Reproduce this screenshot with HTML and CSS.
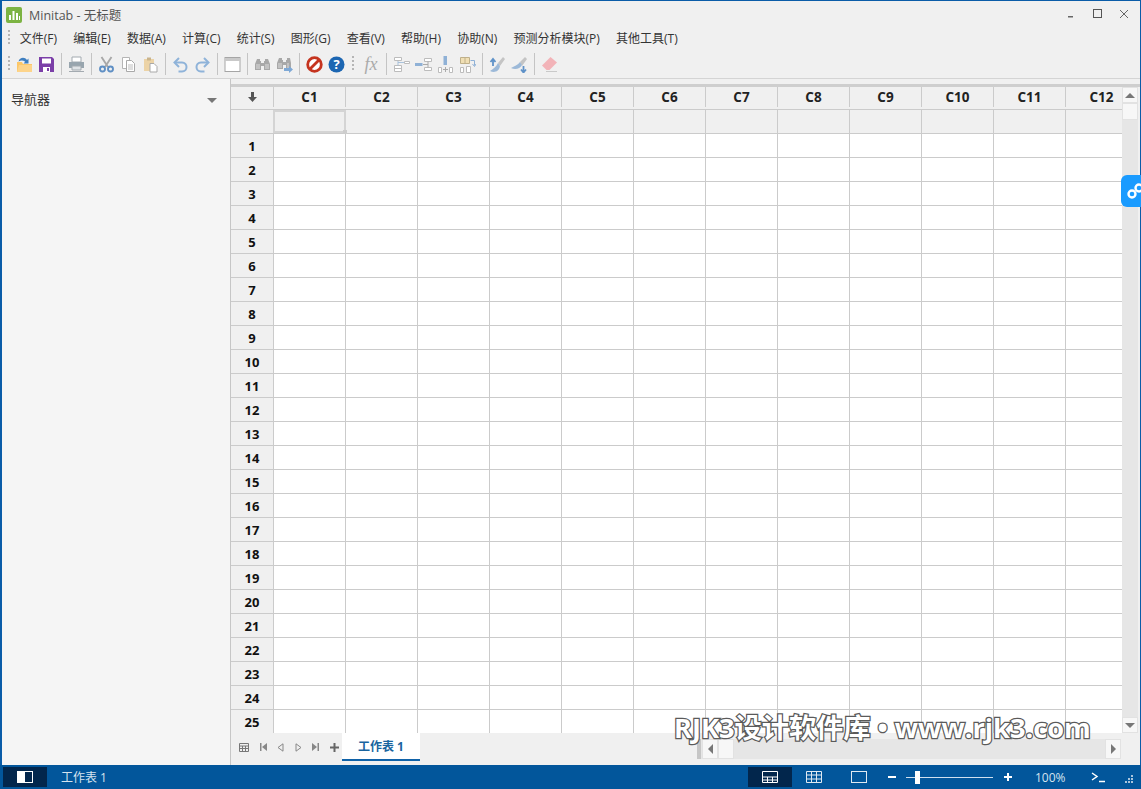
FILE: index.html
```html
<!DOCTYPE html>
<html lang="zh-CN">
<head>
    <meta charset="UTF-8">
    <title>Minitab - 无标题</title>
    <link rel="stylesheet" href="styles.css">
</head>
<body>
<div class="window">
    <div class="titlebar">
        <svg class="app-logo" width="16" height="16" viewBox="0 0 16 16"><rect width="16" height="16" rx="2" fill="#7cb342"/><path d="M3 8h2v5H3zM6.500 4h2v9h-2zM10 6h2v7h-2zM13 9h1v4h-1z" fill="#fff"/></svg>
        <span class="app-title">Minitab - 无标题</span>
        <div class="win-buttons">
            <svg width="12" height="12" viewBox="0 0 12 12"><path d="M2 8h5v1.500H2z" fill="#666"/></svg>
            <svg width="12" height="12" viewBox="0 0 12 12"><rect x="1.500" y="1.500" width="8" height="8" fill="none" stroke="#555"/></svg>
            <svg width="12" height="12" viewBox="0 0 12 12"><path d="M2 2l8 8M10 2l-8 8" stroke="#666" fill="none"/></svg>
        </div>
    </div>

    <div class="menubar">
        <span class="grip"></span>
        <span>文件(F)</span><span>编辑(E)</span><span>数据(A)</span><span>计算(C)</span><span>统计(S)</span><span>图形(G)</span><span>查看(V)</span><span>帮助(H)</span><span>协助(N)</span><span>预测分析模块(P)</span><span>其他工具(T)</span>
    </div>

    <div class="toolbar">
        <span class="grip"></span>
        <span class="tool"><svg viewBox="0 0 17 17"><path d="M1 6h5l1 2h9v8H1z" fill="#fcc768"/><path d="M1 16l2-7h13v7z" fill="#fdd48a"/><path d="M2.500 5.500c1-4 6-5 8.500-1.500l1.500-1.500v5h-5l1.700-1.700C7 4 5 4 2.500 5.500z" fill="#3f7fc0"/></svg></span>
        <span class="tool"><svg viewBox="0 0 17 17"><path d="M1 1h13l2 2v13H1z" fill="#7b3fa8"/><path d="M4 2.500h9v5H4z" fill="#fff"/><path d="M5 11h7v5H5z" fill="#fff"/><path d="M9 12h2v3H9z" fill="#7b3fa8"/></svg></span>
        <span class="sep"></span>
        <span class="tool"><svg viewBox="0 0 17 17"><path d="M4 1h9v5H4z" fill="#fff" stroke="#a3aab0"/><path d="M1 6h15v6H1z" fill="#98a5ae"/><path d="M4 10h9v4H4z" fill="#dfe3e6" stroke="#a3aab0"/><path d="M1 15.500h15" stroke="#a3aab0"/></svg></span>
        <span class="sep"></span>
        <span class="tool"><svg viewBox="0 0 17 17"><path d="M3.500 1l6.500 10M13.500 1L7 11" stroke="#a8a8a8" stroke-width="1.900" fill="none"/><circle cx="4.500" cy="13" r="2.500" fill="none" stroke="#5f8fc4" stroke-width="1.900"/><circle cx="12.500" cy="13" r="2.500" fill="none" stroke="#5f8fc4" stroke-width="1.900"/></svg></span>
        <span class="tool"><svg viewBox="0 0 17 17"><path d="M2.500 1.500h7v11h-7z" fill="#fff" stroke="#b5b5b5"/><path d="M6.500 4.500h5l3 3v8h-8z" fill="#fff" stroke="#a9a9a9"/><path d="M8 9h5M8 11h5M8 13h5" stroke="#bdbdbd"/></svg></span>
        <span class="tool"><svg viewBox="0 0 17 17"><path d="M2 3h10v12H2z" fill="#ecd3a6"/><path d="M5 1.500h4v3H5z" fill="#c9b48d"/><path d="M8 7.500h4l3 3v5.500H8z" fill="#fff" stroke="#a9a9a9"/></svg></span>
        <span class="sep"></span>
        <span class="tool"><svg viewBox="0 0 17 17"><path d="M3 6.500h7c6 0 6 9 0 9H6.500" fill="none" stroke="#8fb3d9" stroke-width="2"/><path d="M7 2L2.500 6.500 7 11" fill="none" stroke="#8fb3d9" stroke-width="2"/></svg></span>
        <span class="tool"><svg viewBox="0 0 17 17"><path d="M14 6.500H7c-6 0-6 9 0 9h3.500" fill="none" stroke="#8fb3d9" stroke-width="2"/><path d="M10 2l4.500 4.500L10 11" fill="none" stroke="#8fb3d9" stroke-width="2"/></svg></span>
        <span class="sep"></span>
        <span class="tool"><svg viewBox="0 0 17 17"><rect x="1" y="1.500" width="15" height="14" fill="#fff" stroke="#a5a5a5"/><path d="M1 2h15v3H1z" fill="#c9c9c9"/></svg></span>
        <span class="sep"></span>
        <span class="tool"><svg viewBox="0 0 17 17"><path d="M3 3h3v2h1v9H1V8zM14 3h-3v2h-1v9h6V8zM7 7h3v3H7z" fill="#a8a8a8"/><path d="M3 8v5M5 8v5M12 8v5M14 8v5" stroke="#dcdcdc"/></svg></span>
        <span class="tool"><svg viewBox="0 0 17 17"><path d="M3 2h3v2h1v9H1V7zM14 2h-3v2h-1v9h5V7zM7 6h3v3H7z" fill="#a8a8a8"/><path d="M3 7v5M5 7v5M12 7v5" stroke="#dcdcdc"/><path d="M8 12h5v-2l4 3.500-4 3.500v-2H8z" fill="#7fa9d6"/></svg></span>
        <span class="sep"></span>
        <span class="tool"><svg viewBox="0 0 17 17"><circle cx="8.500" cy="8.500" r="6.800" fill="#fff" stroke="#c5341f" stroke-width="2.800"/><path d="M4 13L13 4" stroke="#c5341f" stroke-width="2.800"/></svg></span>
        <span class="tool"><svg viewBox="0 0 17 17"><circle cx="8.500" cy="8.500" r="8" fill="#1c66b2"/><text x="8.500" y="13" class="help-mark">?</text></svg></span>
        <span class="grip tool-grip"></span>
        <span class="tool fx">fx</span>
        <span class="sep"></span>
        <span class="tool"><svg viewBox="0 0 17 17"><path d="M1.500 1.500h7v3h-7zM1.500 9.500h7v6h-7zM1.500 12.500h7M11.500 5.500h5v2h-5z" fill="#fff" stroke="#bcbcbc"/><path d="M5 5v4.500M5 6.500h6" stroke="#a9c2dc"/></svg></span>
        <span class="tool"><svg viewBox="0 0 17 17"><path d="M0 7h7.500v3H0z" fill="#8fb1d6"/><path d="M9.500 2.500h7v3h-7zM9.500 11.500h7v3h-7z" fill="#fff" stroke="#bcbcbc"/><path d="M8 8.500h5M13 5.500v6" stroke="#aaa"/></svg></span>
        <span class="tool"><svg viewBox="0 0 17 17"><path d="M6.500 0h3.500v9H6.500z" fill="#8fb1d6"/><path d="M1.500 11.500h3v5h-3zM12.500 11.500h3v5h-3z" fill="#fff" stroke="#bcbcbc"/><path d="M6 13.500h5M8.500 11v5" stroke="#aaa"/></svg></span>
        <span class="tool"><svg viewBox="0 0 17 17"><path d="M1.500 1.500h9v6h-9z" fill="#f0dfb4" stroke="#bfb08a"/><path d="M6 1.500v6" stroke="#bfb08a"/><path d="M1.500 11.500h3v5h-3zM7.500 10.500h4v6h-4z" fill="#fff" stroke="#bcbcbc"/><path d="M11.500 4.500h4v5M13.500 8l2 2.500 1.500-2.500" fill="none" stroke="#8fb1d6"/></svg></span>
        <span class="sep"></span>
        <span class="tool"><svg viewBox="0 0 17 17"><path d="M9 7l5-6 2 2-5 7z" fill="#c4c4c4"/><path d="M1 15c4 2 9 1 10-5L9 7C7 11 4 13 1 15z" fill="#9cb9d8"/><path d="M4 10V4M1.500 6L4 3l2.500 3" fill="none" stroke="#5f92c8" stroke-width="1.800"/></svg></span>
        <span class="tool"><svg viewBox="0 0 17 17"><path d="M9 6l5-5 2 2-5 7z" fill="#c4c4c4"/><path d="M0 12c4 2 9 1 11-3L9 6C7 9 3 10 0 12z" fill="#9cb9d8"/><path d="M12.500 10v6M10 13.500l2.500 3 2.500-3" fill="none" stroke="#5f92c8" stroke-width="1.800"/></svg></span>
        <span class="sep"></span>
        <span class="tool"><svg viewBox="0 0 17 17"><path d="M1 9.500L9.500 1 16 6.500 8.500 14H5.500z" fill="#f2b3b8"/><path d="M5 15.500h11" stroke="#c9c9c9"/></svg></span>
    </div>

    <div class="main">
        <aside class="nav">
            <span>导航器</span>
            <span class="nav-arrow"></span>
        </aside>

        <section class="sheet">
            <div class="band"></div>
            <div class="sheet-body">
                <div class="grid">
                    <div class="row head">
                        <span class="corner"><svg width="9" height="10" viewBox="0 0 9 10"><path d="M3 0h3v5h3L4.500 10 0 5h3z" fill="#555"/></svg></span>
                        <span class="col">C1</span><span class="col">C2</span><span class="col">C3</span><span class="col">C4</span><span class="col">C5</span><span class="col">C6</span><span class="col">C7</span><span class="col">C8</span><span class="col">C9</span><span class="col">C10</span><span class="col">C11</span><span class="col">C12</span>
                    </div>
                    <div class="row names">
                        <span class="corner"></span>
                        <span class="col selected"></span><span class="col"></span><span class="col"></span><span class="col"></span><span class="col"></span><span class="col"></span><span class="col"></span><span class="col"></span><span class="col"></span><span class="col"></span><span class="col"></span><span class="col"></span>
                    </div>
                    <div class="row"><span class="num">1</span></div>
                    <div class="row"><span class="num">2</span></div>
                    <div class="row"><span class="num">3</span></div>
                    <div class="row"><span class="num">4</span></div>
                    <div class="row"><span class="num">5</span></div>
                    <div class="row"><span class="num">6</span></div>
                    <div class="row"><span class="num">7</span></div>
                    <div class="row"><span class="num">8</span></div>
                    <div class="row"><span class="num">9</span></div>
                    <div class="row"><span class="num">10</span></div>
                    <div class="row"><span class="num">11</span></div>
                    <div class="row"><span class="num">12</span></div>
                    <div class="row"><span class="num">13</span></div>
                    <div class="row"><span class="num">14</span></div>
                    <div class="row"><span class="num">15</span></div>
                    <div class="row"><span class="num">16</span></div>
                    <div class="row"><span class="num">17</span></div>
                    <div class="row"><span class="num">18</span></div>
                    <div class="row"><span class="num">19</span></div>
                    <div class="row"><span class="num">20</span></div>
                    <div class="row"><span class="num">21</span></div>
                    <div class="row"><span class="num">22</span></div>
                    <div class="row"><span class="num">23</span></div>
                    <div class="row"><span class="num">24</span></div>
                    <div class="row"><span class="num">25</span></div>
                </div>
                <div class="vscroll">
                    <span class="sb-btn"><i class="tri up"></i></span>
                    <span class="sb-thumb"></span>
                    <span class="sb-fill"></span>
                    <span class="sb-btn"><i class="tri down"></i></span>
                </div>
            </div>
            <div class="tabbar">
                <div class="tab-nav">
                    <svg width="10" height="9" viewBox="0 0 10 9"><path d="M.5.500h9v8h-9zM.5 3h9M.5 5.500h9M3.500 3v5.500M6.500 3v5.500" fill="none" stroke="#777"/></svg>
                    <svg width="7" height="8" viewBox="0 0 7 8"><path d="M0 0h1.500v8H0zM7 0v8L2 4z" fill="#888"/></svg>
                    <svg width="7" height="9" viewBox="0 0 7 9"><path d="M6 .800v7.400L1 4.500z" fill="none" stroke="#888"/></svg>
                    <svg width="7" height="9" viewBox="0 0 7 9"><path d="M1 .800v7.400l5-3.700z" fill="none" stroke="#888"/></svg>
                    <svg width="7" height="8" viewBox="0 0 7 8"><path d="M7 0H5.500v8H7zM0 0v8l5-4z" fill="#888"/></svg>
                    <svg width="9" height="9" viewBox="0 0 9 9"><path d="M3.500 0h2v3.500H9v2H5.500V9h-2V5.500H0v-2h3.500z" fill="#666"/></svg>
                </div>
                <div class="tab">工作表 1</div>
                <div class="hscroll">
                    <span class="hs-split"></span>
                    <span class="sb-btn"><i class="tri left"></i></span>
                    <span class="sb-thumb"></span>
                    <span class="sb-fill"></span>
                    <span class="sb-btn"><i class="tri right"></i></span>
                </div>
            </div>
        </section>
    </div>

    <div class="statusbar">
        <span class="st-btn"><svg width="16" height="12" viewBox="0 0 16 12"><path d="M0 0h8v12H0z" fill="#fff"/><rect x=".5" y=".5" width="15" height="11" fill="none" stroke="#fff"/></svg></span>
        <span class="st-label">工作表 1</span>
        <span class="st-btn st-view"><svg width="16" height="12" viewBox="0 0 16 12"><path d="M.5.500h15v11H.5zM.5 6h15M.5 9h15M5.500 6v5.500M10.500 6v5.500" fill="none" stroke="#fff"/></svg></span>
        <svg class="st-grid" width="16" height="12" viewBox="0 0 16 12"><path d="M.5.500h15v11H.5zM.5 4h15M.5 8h15M5.500.500v11M10.500.500v11" fill="none" stroke="#dfe9f2"/></svg>
        <svg class="st-rect" width="16" height="12" viewBox="0 0 16 12"><rect x=".5" y=".5" width="15" height="11" fill="none" stroke="#dfe9f2"/></svg>
        <span class="zoom-minus"></span>
        <span class="slider"><i></i></span>
        <svg class="zoom-plus" width="8" height="8" viewBox="0 0 8 8"><path d="M3 0h2v3h3v2H5v3H3V5H0V3h3z" fill="#fff"/></svg>
        <span class="st-zoom">100%</span>
        <svg class="st-prompt" width="14" height="11" viewBox="0 0 14 11"><path d="M1 1l5 3.500L1 8" fill="none" stroke="#fff" stroke-width="1.500"/><path d="M8 9.500h6" stroke="#fff" stroke-width="1.500"/></svg>
        <svg class="st-resize" width="8" height="8" viewBox="0 0 8 8"><path d="M6 0h2v2H6zM3 3h2v2H3zM6 3h2v2H6zM0 6h2v2H0zM3 6h2v2H3zM6 6h2v2H6z" fill="#a9c4dc"/></svg>
    </div>
</div>

<!-- things lying over the window -->
<div class="side-tab"><svg width="18" height="18" viewBox="0 0 18 18"><circle cx="6" cy="12" r="3.500" fill="none" stroke="#fff" stroke-width="2.400"/><circle cx="13" cy="6" r="3.500" fill="none" stroke="#fff" stroke-width="2.400"/></svg></div>
<div class="faint f1">www.rjk3.com</div>
<div class="faint f2">www.rjk3.com</div>
<div class="faint f3">www.rjk3.com</div>
<div class="faint f4">www.rjk3.com</div>
<div class="faint f5">www.rjk3.com</div>
<div class="stamp">RJK3设计软件库 • www.rjk3.com</div>
</body>
</html>
```

FILE: styles.css
```css
* {
    box-sizing: border-box;
}
body {
    margin: 0;
    width: 1141px;
    height: 789px;
    overflow: hidden;
    position: relative;
    font-family: "Open Sans", "Noto Sans CJK SC", sans-serif;
    font-size: 12px;
    color: #333;
}
.window {
    height: 789px;
    display: flex;
    flex-direction: column;
    background-color: #f0f0f0;
    border-top: 1px solid #0a5ca8;
    border-left: 2px solid #0a5ca8;
    border-right: 1px solid #0a5ca8;
}

/* title */
.titlebar {
    height: 26px;
    flex: none;
    display: flex;
    align-items: center;
    padding-left: 4px;
}
.app-logo {
    margin-top: 1px;
}
.app-title {
    margin-left: 7px;
    font-size: 12.500px;
    color: #555;
}
.win-buttons {
    margin-left: auto;
    margin-right: 10px;
    display: flex;
    gap: 14px;
}

/* menu + tools */
.menubar {
    height: 23px;
    flex: none;
    display: flex;
    align-items: center;
    gap: 16.200px;
    padding: 0 0 2px 6px;
    font-size: 12px;
    color: #333;
}
.menubar .grip {
    margin-right: -6.500px;
}
.grip {
    width: 2px;
    height: 16px;
    flex: none;
    background-image: repeating-linear-gradient(to bottom, #b5b5b5 0, #b5b5b5 2px, transparent 2px, transparent 4px);
}
.toolbar {
    height: 29px;
    flex: none;
    display: flex;
    align-items: center;
    padding-left: 6px;
    border-bottom: 1px solid #d4d4d4;
}
.toolbar > .grip {
    margin-right: 3px;
}
.toolbar > .grip.tool-grip {
    margin: 0 6px 0 5px;
}
.tool {
    width: 22px;
    height: 22px;
    flex: none;
    display: flex;
    align-items: center;
    justify-content: center;
}
.tool svg {
    width: 17px;
    height: 17px;
}
.help-mark {
    font-family: "Open Sans", sans-serif;
    font-size: 13px;
    font-weight: 700;
    fill: #fff;
    text-anchor: middle;
}
.fx {
    font-family: "Liberation Serif", serif;
    font-style: italic;
    font-size: 18px;
    color: #aaa;
}
.sep {
    width: 1px;
    height: 22px;
    margin: 0 3.500px;
    flex: none;
    background-color: #c4c4c4;
}

/* main area */
.main {
    flex: 1;
    display: flex;
    min-height: 0;
}
.nav {
    width: 229px;
    flex: none;
    display: flex;
    justify-content: space-between;
    align-items: flex-start;
    padding: 10px 13px 0 9px;
    background-color: #f5f5f5;
    border-right: 1px solid #c6c6c6;
    font-size: 13px;
    color: #333;
}
.nav-arrow {
    margin-top: 9px;
    border-style: solid;
    border-width: 5px 5px 0;
    border-color: #777 transparent transparent;
}
.sheet {
    flex: 1;
    min-width: 0;
    display: flex;
    flex-direction: column;
}
.band {
    height: 8px;
    flex: none;
    border-bottom: 3px solid #cecece;
}
.sheet-body {
    height: 646px;
    flex: none;
    display: flex;
}
.grid {
    width: 891px;
    flex: none;
    overflow: hidden;
    background-color: #fff;
}
.row {
    height: 24px;
    display: flex;
    border-bottom: 1px solid #cbcbcb;
    background-image: repeating-linear-gradient(to right, #cbcbcb 0, #cbcbcb 1px, transparent 1px, transparent 72px);
    background-position: 42px 0;
}
.row.head {
    height: 23px;
    padding-bottom: 2px;
}
.row.head,
.row.names {
    background: #f0f0f0;
}
.corner,
.num {
    width: 42px;
    flex: none;
    display: flex;
    align-items: center;
    justify-content: center;
    background-color: #f0f0f0;
}
.num {
    font-weight: 700;
    font-size: 13px;
    color: #111;
    padding-top: 1px;
}
.col {
    width: 72px;
    flex: none;
    display: flex;
    align-items: center;
    justify-content: center;
    border-left: 1px solid #cbcbcb;
    font-weight: 700;
    font-size: 13.500px;
    color: #222;
}
.col.selected {
    position: relative;
    width: 73px;
    margin-right: -1px;
    z-index: 1;
    background-color: #efefef;
    border: 2px solid #d4d4d4;
}
.col.selected::after {
    content: "";
    position: absolute;
    right: -3px;
    bottom: -3px;
    width: 4px;
    height: 4px;
    background-color: #cdcdcd;
}

/* scroll bars */
.vscroll {
    width: 16px;
    flex: none;
    display: flex;
    flex-direction: column;
    background-color: #e6e6e6;
}
.sb-btn {
    width: 16px;
    height: 16px;
    flex: none;
    display: flex;
    align-items: center;
    justify-content: center;
    background-color: #f7f7f7;
    border: 1px solid #e2e2e2;
}
.sb-thumb {
    width: 16px;
    height: 17px;
    flex: none;
    background-color: #f7f7f7;
    border: 1px solid #e2e2e2;
}
.sb-fill {
    flex: 1;
}
.tri {
    width: 0;
    height: 0;
    border-style: solid;
}
.tri.up {
    border-width: 0 5px 5px;
    border-color: transparent transparent #777;
}
.tri.down {
    border-width: 5px 5px 0;
    border-color: #777 transparent transparent;
}
.tri.left {
    border-width: 5px 5px 5px 0;
    border-color: transparent #777 transparent transparent;
}
.tri.right {
    border-width: 5px 0 5px 5px;
    border-color: transparent transparent transparent #777;
}

/* sheet tabs */
.tabbar {
    flex: 1;
    display: flex;
    align-items: flex-start;
}
.tab-nav {
    width: 111px;
    height: 28px;
    flex: none;
    display: flex;
    align-items: center;
    padding-left: 8px;
    gap: 10.500px;
}
.tab {
    width: 78px;
    height: 28px;
    flex: none;
    display: flex;
    align-items: center;
    justify-content: center;
    background-color: #fff;
    border-bottom: 2px solid #0f62a8;
    font-weight: 700;
    color: #19649f;
}
.hscroll {
    margin: 6px 0 0 277px;
    width: 424px;
    height: 20px;
    display: flex;
    align-items: stretch;
    background-color: #e6e6e6;
}
.hs-split {
    width: 4px;
    flex: none;
    background-color: #c6c6c6;
    margin-right: 1px;
}
.hscroll .sb-btn,
.hscroll .sb-thumb {
    height: auto;
}

/* status bar */
.statusbar {
    height: 24px;
    flex: none;
    margin: 0 -1px 0 -2px;
    display: flex;
    align-items: center;
    background-color: #02569b;
    color: #d5e3ef;
}
.st-btn {
    width: 44px;
    height: 20px;
    flex: none;
    display: flex;
    align-items: center;
    justify-content: center;
    background-color: #02264c;
}
.statusbar > .st-btn:first-child {
    margin-left: 3px;
}
.st-label {
    margin-left: 14px;
    width: 687px;
    flex: none;
}
.st-grid {
    margin-left: 14px;
}
.st-rect {
    margin-left: 29px;
}
.zoom-minus {
    margin-left: 21px;
    width: 8px;
    height: 2px;
    background-color: #fff;
}
.slider {
    margin-left: 10px;
    width: 87px;
    height: 1px;
    position: relative;
    background-color: #cfe0ef;
}
.slider i {
    position: absolute;
    left: 9px;
    top: -6px;
    width: 5px;
    height: 13px;
    background-color: #fff;
}
.zoom-plus {
    margin-left: 11px;
}
.st-zoom {
    margin-left: 23px;
}
.st-prompt {
    margin-left: 25px;
}
.st-resize {
    margin-left: 20px;
    margin-top: 4px;
}

/* overlays */
.side-tab {
    position: absolute;
    right: 0;
    top: 175px;
    width: 20px;
    height: 32px;
    border-radius: 6px 0 0 6px;
    background-color: #1a9bff;
    display: flex;
    align-items: center;
    padding-left: 5px;
    overflow: hidden;
}
.side-tab svg {
    flex: none;
}
.stamp {
    position: absolute;
    left: 674px;
    top: 709px;
    font-family: "Open Sans", "Noto Sans CJK SC", sans-serif;
    font-size: 27.200px;
    font-weight: 700;
    line-height: 38px;
    white-space: nowrap;
    color: #fff;
    -webkit-text-stroke: 2.500px #5a5a5a;
    paint-order: stroke fill;
}
.faint {
    position: absolute;
    font-size: 30px;
    color: rgba(0, 0, 0, 0.025);
    white-space: nowrap;
    transform: rotate(-30deg);
}
.f1 { left: 15px; top: 400px; }
.f2 { left: 15px; top: 600px; }
.f3 { left: 300px; top: 200px; }
.f4 { left: 450px; top: 350px; }
.f5 { left: 860px; top: 150px; }
```
